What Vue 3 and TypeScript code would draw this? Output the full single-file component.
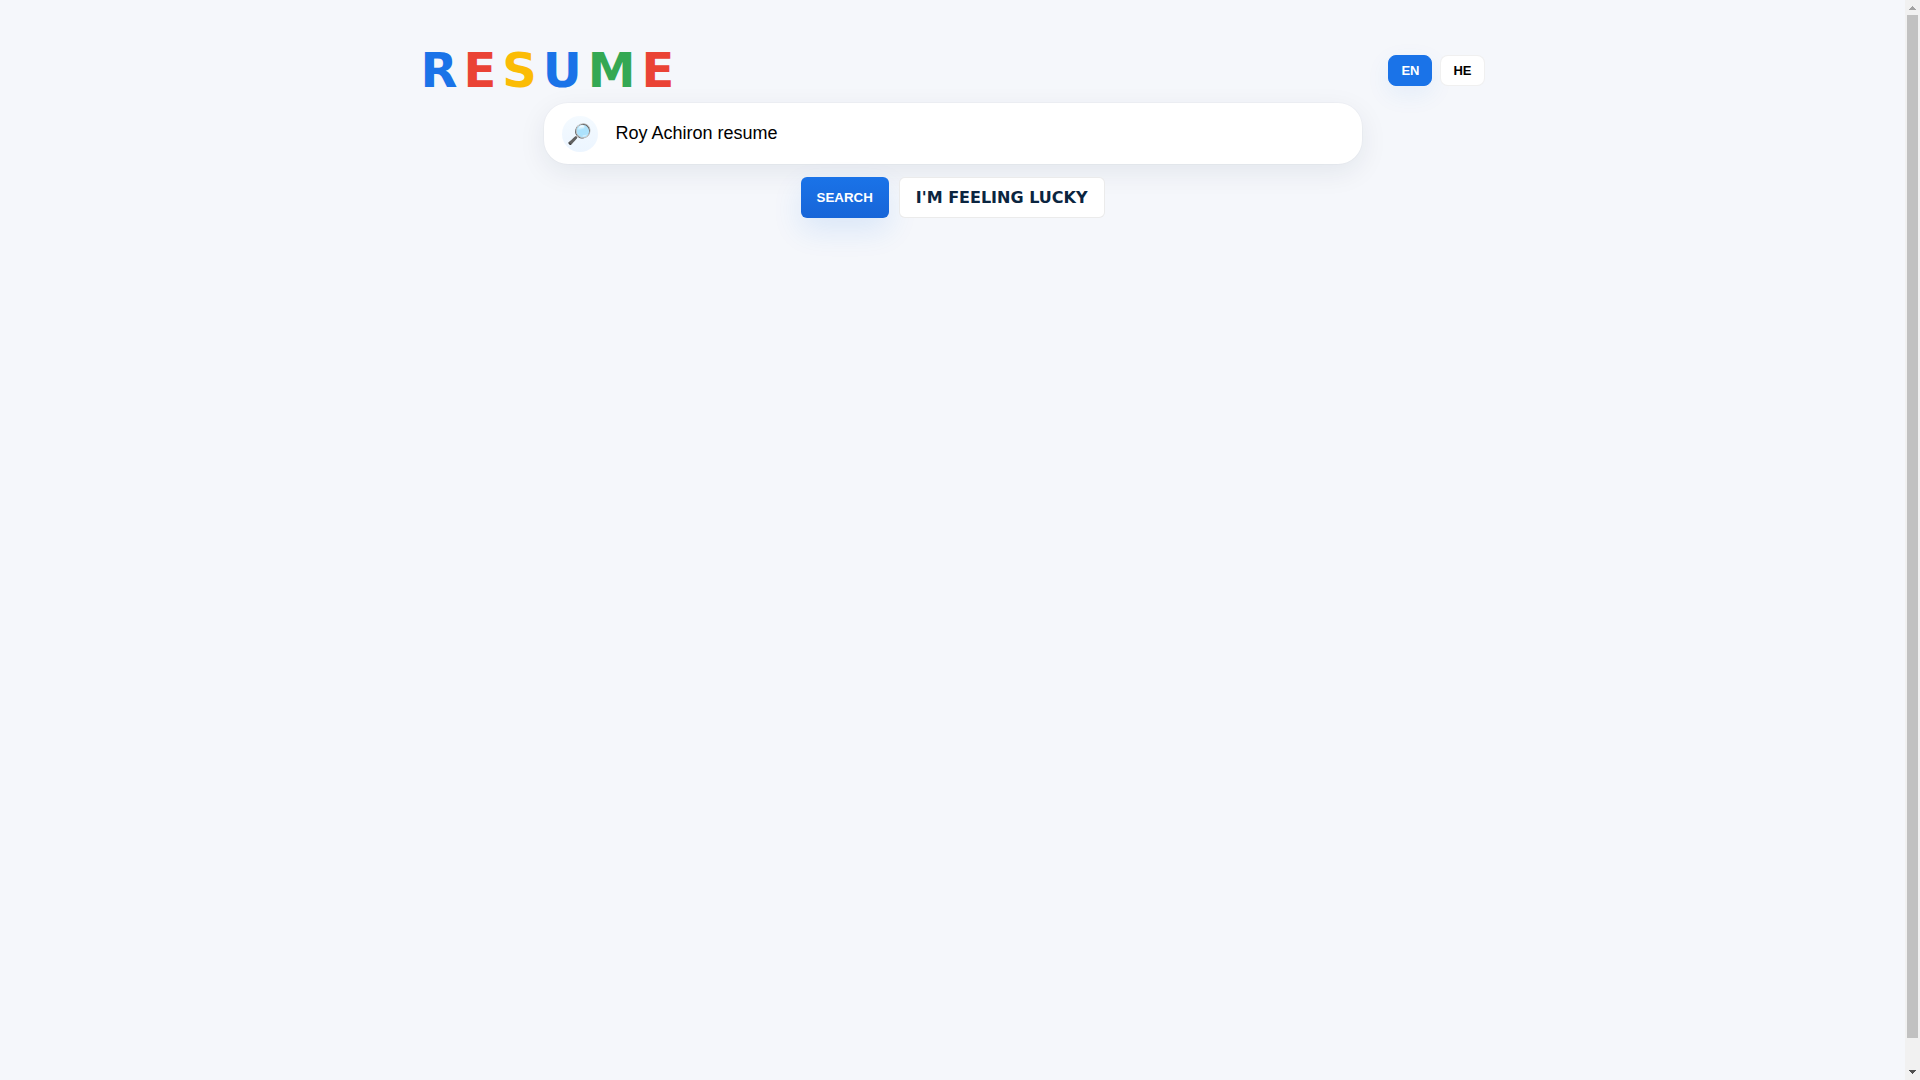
<script setup lang="ts">
import { ref } from 'vue'

const letters = [
  { char: 'R', tone: 'blue' },
  { char: 'E', tone: 'red' },
  { char: 'S', tone: 'yellow' },
  { char: 'U', tone: 'blue' },
  { char: 'M', tone: 'green' },
  { char: 'E', tone: 'red' },
]
const languages = ['EN', 'HE']
const language = ref('EN')
const query = ref('Roy Achiron resume')
</script>

<template>
  <div class="shell">
    <main class="page">
      <header class="header">
        <h1 class="logo">
          <span v-for="(letter, i) in letters" :key="i" :class="letter.tone">{{ letter.char }}</span>
        </h1>
        <div class="languages">
          <button
            v-for="lang in languages"
            :key="lang"
            type="button"
            class="language"
            :class="{ active: lang === language }"
            @click="language = lang"
          >{{ lang }}</button>
        </div>
      </header>
      <form class="search" @submit.prevent>
        <div class="box">
          <span class="icon" aria-hidden="true">🔎</span>
          <input v-model="query" class="query" type="text" aria-label="Search" />
        </div>
        <div class="actions">
          <button type="submit" class="submit">SEARCH</button>
          <a class="lucky" href="#">I'M FEELING LUCKY</a>
        </div>
      </form>
    </main>
    <div class="scrollbar" aria-hidden="true">
      <svg class="arrow" viewBox="0 0 15 15" shape-rendering="crispEdges">
        <path d="M7 6h1v1h1v1h1v1h1v1H4V9h1V8h1V7h1z" fill="#a3a3a3" />
      </svg>
      <div class="track"><div class="thumb"></div></div>
      <svg class="arrow" viewBox="0 0 15 15" shape-rendering="crispEdges">
        <path d="M4 5h7v1h-1v1H9v1H8v1H7V8H6V7H5V6H4z" fill="#505050" />
      </svg>
    </div>
  </div>
</template>

<style>
body {
  margin: 0;
  background: #f5f7fb;
}
</style>

<style scoped>
.shell {
  display: flex;
  min-height: 100vh;
  font-family: "DejaVu Sans", sans-serif;
  color: #0b2540;
}
.page {
  box-sizing: border-box;
  flex: 1;
  min-width: 0;
  max-width: 1100px;
  margin: 0 auto;
  padding: 42px 18px 0;
}
.header {
  display: flex;
  align-items: center;
  justify-content: space-between;
}
.logo {
  display: flex;
  gap: 6px;
  margin: 0;
  font-size: 48px;
  line-height: 57px;
  font-weight: 700;
}
.blue { color: #1a73e8; }
.red { color: #ea4335; }
.yellow { color: #fbbc05; }
.green { color: #34a853; }
.languages {
  display: flex;
  gap: 8px;
}
.language {
  padding: 7px 12px;
  border: 1px solid rgba(0, 0, 0, 0.06);
  border-radius: 8px;
  background: #fff;
  color: #000;
  font: 700 13px/15px "Liberation Sans", Arial, sans-serif;
  cursor: pointer;
}
.language.active {
  border-color: #1a73e8;
  background: #1a73e8;
  color: #fff;
  box-shadow: 0 8px 24px rgba(26, 115, 232, 0.08);
}
.search {
  display: flex;
  flex-direction: column;
  align-items: center;
  gap: 13px;
  margin-top: 4px;
}
.box {
  box-sizing: border-box;
  display: flex;
  align-items: center;
  gap: 14px;
  width: 100%;
  max-width: 818px;
  height: 61px;
  padding: 0 18px;
  border-radius: 24px;
  background: #fff;
  box-shadow: 0 0 0 1px rgba(0, 0, 0, 0.02), 0 8px 28px rgba(11, 37, 69, 0.08);
}
.icon {
  display: grid;
  place-items: center;
  width: 36px;
  height: 36px;
  border-radius: 50%;
  background: linear-gradient(#f4faff, #ecf5ff);
  font-size: 20px;
  line-height: 24px;
}
.query {
  flex: 1;
  min-width: 0;
  padding: 0 4px 2px;
  border: 0;
  outline: 0;
  background: transparent;
  color: #000;
  font: 18px/22px "Liberation Sans", Arial, sans-serif;
}
.actions {
  display: flex;
  gap: 10px;
}
.submit {
  padding: 0 16px;
  border: 0;
  border-radius: 6px;
  background: linear-gradient(#1a73e8, #1765d8);
  color: #fff;
  font-family: "Liberation Sans", Arial, sans-serif;
  font-weight: 700;
  box-shadow: 0 12px 30px rgba(26, 115, 232, 0.12);
  cursor: pointer;
}
.lucky {
  padding: 10px 16px;
  border: 1px solid rgba(0, 0, 0, 0.08);
  border-radius: 6px;
  background: #fff;
  color: #0b2540;
  font-size: 16px;
  font-weight: 700;
  line-height: 19px;
  text-decoration: none;
}
.scrollbar {
  position: sticky;
  top: 0;
  display: flex;
  flex-direction: column;
  width: 15px;
  height: 100vh;
  background: #f1f1f1;
}
.arrow {
  display: block;
  width: 15px;
  height: 15px;
}
.track {
  flex: 1;
  padding: 0 2px;
}
.thumb {
  height: calc(100% - 27px);
  background: #c1c1c1;
}
</style>
